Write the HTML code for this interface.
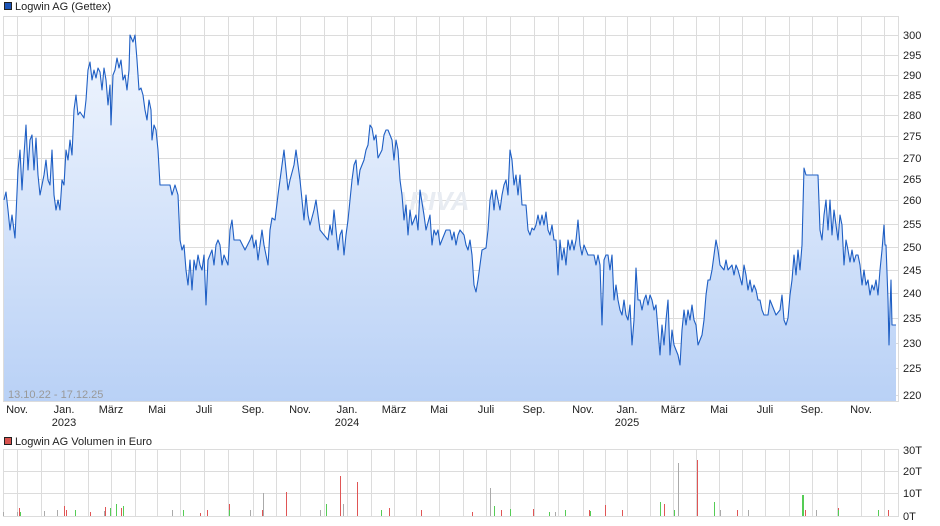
<!DOCTYPE html>
<html><head><meta charset="utf-8"><style>
html,body{margin:0;padding:0;background:#fff;width:940px;height:526px;overflow:hidden}
svg{display:block;font-family:"Liberation Sans",sans-serif}
</style></head><body>
<svg width="940" height="526" viewBox="0 0 940 526">
<defs><linearGradient id="g" x1="0" y1="0" x2="0" y2="1"><stop offset="0" stop-color="#f1f6fe"/><stop offset="1" stop-color="#b9d1f6"/></linearGradient></defs>
<rect x="4.5" y="2.5" width="7" height="7" fill="#1c55b8" stroke="#222" stroke-width="1"/>
<text x="15" y="10" font-size="11" fill="#222">Logwin AG (Gettex)</text>
<g stroke="#dcdcdc" stroke-width="1" fill="none">
<rect x="3.5" y="16.5" width="895" height="385"/>
<path d="M3 35.5H898M3 55.5H898M3 75.5H898M3 95.5H898M3 115.5H898M3 136.5H898M3 158.5H898M3 179.5H898M3 200.5H898M3 224.5H898M3 247.5H898M3 270.5H898M3 293.5H898M3 318.5H898M3 343.5H898M3 368.5H898M3 395.5H898"/>
<path d="M17.5 16V401M41.5 16V401M64.5 16V401M88.5 16V401M111.5 16V401M135.5 16V401M157.5 16V401M180.5 16V401M204.5 16V401M228.5 16V401M253.5 16V401M276.5 16V401M300.5 16V401M324.5 16V401M347.5 16V401M371.5 16V401M394.5 16V401M416.5 16V401M439.5 16V401M463.5 16V401M486.5 16V401M510.5 16V401M534.5 16V401M558.5 16V401M583.5 16V401M605.5 16V401M627.5 16V401M650.5 16V401M673.5 16V401M696.5 16V401M719.5 16V401M742.5 16V401M765.5 16V401M789.5 16V401M812.5 16V401M837.5 16V401M861.5 16V401M884.5 16V401"/>
</g>
<text x="430" y="210" font-size="26" font-weight="bold" font-style="italic" fill="#e8ecf2" text-anchor="middle">ARIVA</text>
<polygon id="area" fill="url(#g)" points="4,401 4,200 6,192 8,210 10,230 12,215 15,238 18,170 20,150 22,190 24,155 26,125 28,170 30,140 32,135 34,170 36,138 38,175 40,195 42,185 44,175 46,160 48,180 50,185 52,150 54,195 56,210 58,200 60,210 62,180 64,185 66,150 68,160 70,140 72,155 74,110 76,95 78,115 80,112 84,118 86,100 88,70 90,62 92,80 94,70 96,78 98,68 100,72 102,90 104,68 106,80 108,105 110,85 111,125 113,75 115,70 117,58 119,68 121,60 123,80 125,75 127,90 129,70 130,35 133,42 135,35 137,60 139,90 141,88 143,95 145,110 147,120 149,100 151,110 152,140 154,125 156,130 158,150 160,185 170,185 172,195 175,185 178,195 180,240 182,250 184,245 186,270 188,285 190,260 192,290 194,260 196,270 198,255 200,265 202,270 204,255 206,305 208,260 210,255 212,250 214,265 216,245 218,240 220,245 222,265 224,255 226,260 228,265 230,230 232,220 234,240 240,240 245,250 250,240 252,235 254,248 256,240 258,260 262,230 264,245 268,265 270,230 272,218 275,220 278,195 282,165 284,150 286,170 288,190 290,180 294,165 296,150 298,165 300,180 302,200 304,220 306,195 308,215 310,225 314,210 316,200 318,215 320,230 324,235 328,240 330,225 332,235 334,210 336,230 338,250 340,235 342,230 344,255 346,235 348,220 350,200 352,180 354,165 356,160 358,185 360,170 364,160 366,150 368,145 370,125 372,128 374,140 376,135 378,158 382,150 384,135 386,130 388,130 392,140 394,160 396,140 398,150 400,180 402,195 404,220 406,205 408,235 410,210 412,225 414,220 416,215 418,230 420,190 424,215 426,230 430,215 432,245 434,230 436,235 438,230 440,245 444,235 446,230 450,230 452,240 454,232 456,245 458,235 460,230 464,235 466,245 468,250 470,240 472,255 474,285 476,292 478,280 482,250 486,248 488,230 490,200 492,190 494,210 496,190 498,200 500,210 502,195 504,185 506,180 508,195 510,150 512,160 514,185 516,175 518,195 520,175 522,205 526,205 528,230 530,235 532,228 534,230 536,225 538,215 540,225 542,215 544,225 546,212 548,230 550,235 552,225 554,240 556,240 558,275 560,240 562,260 564,248 566,265 568,240 570,250 572,240 574,250 576,240 578,220 580,245 582,255 584,245 586,250 588,255 590,255 594,255 596,265 598,255 600,265 602,325 604,260 606,255 608,255 610,270 612,255 614,300 616,285 618,300 620,310 622,315 624,300 626,315 628,320 630,305 632,345 634,320 636,268 638,300 640,300 642,310 644,300 646,295 648,305 650,295 652,300 654,310 656,305 658,330 660,355 662,325 664,345 666,320 668,300 670,355 672,330 674,345 676,350 678,355 680,365 682,330 684,310 686,325 688,310 690,320 692,305 694,320 696,325 698,345 700,340 702,335 704,320 706,295 708,280 710,280 712,270 716,240 718,250 720,265 724,270 726,260 728,270 732,265 734,275 736,265 738,270 742,285 744,265 746,275 748,290 750,280 752,292 754,285 756,290 758,300 760,300 762,310 764,315 768,315 770,300 772,305 776,315 780,310 782,295 784,320 786,325 788,318 790,295 792,280 794,255 796,275 798,250 800,270 802,245 804,168 806,175 818,175 820,230 822,240 824,215 826,200 828,230 830,200 832,235 834,210 836,225 838,240 840,215 842,225 844,265 846,240 848,250 850,262 852,250 854,262 856,255 858,255 860,265 862,285 864,270 866,285 868,280 870,295 872,285 874,290 876,280 878,295 880,270 882,250 884,225 885,245 886,245 888,300 889,345 890,310 891,280 892,325 896,325 896,401"/>
<polyline fill="none" stroke="#1f5fc4" stroke-width="1.1" stroke-linejoin="round" points="4,200 6,192 8,210 10,230 12,215 15,238 18,170 20,150 22,190 24,155 26,125 28,170 30,140 32,135 34,170 36,138 38,175 40,195 42,185 44,175 46,160 48,180 50,185 52,150 54,195 56,210 58,200 60,210 62,180 64,185 66,150 68,160 70,140 72,155 74,110 76,95 78,115 80,112 84,118 86,100 88,70 90,62 92,80 94,70 96,78 98,68 100,72 102,90 104,68 106,80 108,105 110,85 111,125 113,75 115,70 117,58 119,68 121,60 123,80 125,75 127,90 129,70 130,35 133,42 135,35 137,60 139,90 141,88 143,95 145,110 147,120 149,100 151,110 152,140 154,125 156,130 158,150 160,185 170,185 172,195 175,185 178,195 180,240 182,250 184,245 186,270 188,285 190,260 192,290 194,260 196,270 198,255 200,265 202,270 204,255 206,305 208,260 210,255 212,250 214,265 216,245 218,240 220,245 222,265 224,255 226,260 228,265 230,230 232,220 234,240 240,240 245,250 250,240 252,235 254,248 256,240 258,260 262,230 264,245 268,265 270,230 272,218 275,220 278,195 282,165 284,150 286,170 288,190 290,180 294,165 296,150 298,165 300,180 302,200 304,220 306,195 308,215 310,225 314,210 316,200 318,215 320,230 324,235 328,240 330,225 332,235 334,210 336,230 338,250 340,235 342,230 344,255 346,235 348,220 350,200 352,180 354,165 356,160 358,185 360,170 364,160 366,150 368,145 370,125 372,128 374,140 376,135 378,158 382,150 384,135 386,130 388,130 392,140 394,160 396,140 398,150 400,180 402,195 404,220 406,205 408,235 410,210 412,225 414,220 416,215 418,230 420,190 424,215 426,230 430,215 432,245 434,230 436,235 438,230 440,245 444,235 446,230 450,230 452,240 454,232 456,245 458,235 460,230 464,235 466,245 468,250 470,240 472,255 474,285 476,292 478,280 482,250 486,248 488,230 490,200 492,190 494,210 496,190 498,200 500,210 502,195 504,185 506,180 508,195 510,150 512,160 514,185 516,175 518,195 520,175 522,205 526,205 528,230 530,235 532,228 534,230 536,225 538,215 540,225 542,215 544,225 546,212 548,230 550,235 552,225 554,240 556,240 558,275 560,240 562,260 564,248 566,265 568,240 570,250 572,240 574,250 576,240 578,220 580,245 582,255 584,245 586,250 588,255 590,255 594,255 596,265 598,255 600,265 602,325 604,260 606,255 608,255 610,270 612,255 614,300 616,285 618,300 620,310 622,315 624,300 626,315 628,320 630,305 632,345 634,320 636,268 638,300 640,300 642,310 644,300 646,295 648,305 650,295 652,300 654,310 656,305 658,330 660,355 662,325 664,345 666,320 668,300 670,355 672,330 674,345 676,350 678,355 680,365 682,330 684,310 686,325 688,310 690,320 692,305 694,320 696,325 698,345 700,340 702,335 704,320 706,295 708,280 710,280 712,270 716,240 718,250 720,265 724,270 726,260 728,270 732,265 734,275 736,265 738,270 742,285 744,265 746,275 748,290 750,280 752,292 754,285 756,290 758,300 760,300 762,310 764,315 768,315 770,300 772,305 776,315 780,310 782,295 784,320 786,325 788,318 790,295 792,280 794,255 796,275 798,250 800,270 802,245 804,168 806,175 818,175 820,230 822,240 824,215 826,200 828,230 830,200 832,235 834,210 836,225 838,240 840,215 842,225 844,265 846,240 848,250 850,262 852,250 854,262 856,255 858,255 860,265 862,285 864,270 866,285 868,280 870,295 872,285 874,290 876,280 878,295 880,270 882,250 884,225 885,245 886,245 888,300 889,345 890,310 891,280 892,325 896,325"/>
<text x="8" y="398" font-size="11" fill="#999">13.10.22 - 17.12.25</text>
<g font-size="11" fill="#222">
<text x="903" y="39">300</text><text x="903" y="59">295</text><text x="903" y="79">290</text><text x="903" y="99">285</text><text x="903" y="119">280</text><text x="903" y="140">275</text><text x="903" y="162">270</text><text x="903" y="183">265</text><text x="903" y="204">260</text><text x="903" y="228">255</text><text x="903" y="251">250</text><text x="903" y="274">245</text><text x="903" y="297">240</text><text x="903" y="322">235</text><text x="903" y="347">230</text><text x="903" y="372">225</text><text x="903" y="399">220</text>
</g>
<g font-size="11" fill="#222" text-anchor="middle">
<text x="17" y="413">Nov.</text><text x="64" y="413">Jan.</text><text x="64" y="426">2023</text><text x="111" y="413">März</text><text x="157" y="413">Mai</text><text x="204" y="413">Juli</text><text x="253" y="413">Sep.</text><text x="300" y="413">Nov.</text><text x="347" y="413">Jan.</text><text x="347" y="426">2024</text><text x="394" y="413">März</text><text x="439" y="413">Mai</text><text x="486" y="413">Juli</text><text x="534" y="413">Sep.</text><text x="583" y="413">Nov.</text><text x="627" y="413">Jan.</text><text x="627" y="426">2025</text><text x="673" y="413">März</text><text x="719" y="413">Mai</text><text x="765" y="413">Juli</text><text x="812" y="413">Sep.</text><text x="861" y="413">Nov.</text>
</g>
<rect x="4.5" y="437.5" width="7" height="7" fill="#d9534f" stroke="#222" stroke-width="1"/>
<text x="15" y="445" font-size="11" fill="#222">Logwin AG Volumen in Euro</text>
<g stroke="#dcdcdc" stroke-width="1" fill="none">
<rect x="3.5" y="449.5" width="895" height="67"/>
<path d="M3 471.5H898M3 493.5H898"/>
<path d="M17.5 450V516M41.5 450V516M64.5 450V516M88.5 450V516M111.5 450V516M135.5 450V516M157.5 450V516M180.5 450V516M204.5 450V516M228.5 450V516M253.5 450V516M276.5 450V516M300.5 450V516M324.5 450V516M347.5 450V516M371.5 450V516M394.5 450V516M416.5 450V516M439.5 450V516M463.5 450V516M486.5 450V516M510.5 450V516M534.5 450V516M558.5 450V516M583.5 450V516M605.5 450V516M627.5 450V516M650.5 450V516M673.5 450V516M696.5 450V516M719.5 450V516M742.5 450V516M765.5 450V516M789.5 450V516M812.5 450V516M837.5 450V516M861.5 450V516M884.5 450V516"/>
</g>
<g stroke-width="1">
<path stroke="#e05555" d="M19.5 516V508M64.5 516V506M66.5 516V510M90.5 516V512M105.5 516V507M121.5 516V508M123.5 516V510M200.5 516V513M207.5 516V510M229.5 516V504M262.5 516V510M286.5 516V492M340.5 516V476M357.5 516V482M389.5 516V508M421.5 516V510M472.5 516V512M501.5 516V510M533.5 516V509M589.5 516V510M605.5 516V505M622.5 516V510M664.5 516V504M697.5 516V460M737.5 516V510M805.5 516V510M838.5 516V508M888.5 516V510"/>
<path stroke="#55cc55" d="M20.5 516V512M75.5 516V510M110.5 516V508M116.5 516V504M123.5 516V506M183.5 516V510M229.5 516V510M326.5 516V504M381.5 516V510M494.5 516V506M510.5 516V509M549.5 516V512M565.5 516V510M590.5 516V511M660.5 516V502M674.5 516V510M714.5 516V502M802.5 516V495M803.5 516V495M838.5 516V510M878.5 516V510"/>
<path stroke="#aaaaaa" d="M3.5 516V512M17.5 516V512M44.5 516V511M57.5 516V510M104.5 516V511M172.5 516V510M250.5 516V510M263.5 516V493M320.5 516V510M343.5 516V504M490.5 516V488M555.5 516V512M678.5 516V463M720.5 516V510M748.5 516V510M816.5 516V510"/>
</g>
<g font-size="11" fill="#222">
<text x="903" y="454">30T</text><text x="903" y="475">20T</text><text x="903" y="497">10T</text><text x="903" y="520">0T</text>
</g>
</svg>
</body></html>
